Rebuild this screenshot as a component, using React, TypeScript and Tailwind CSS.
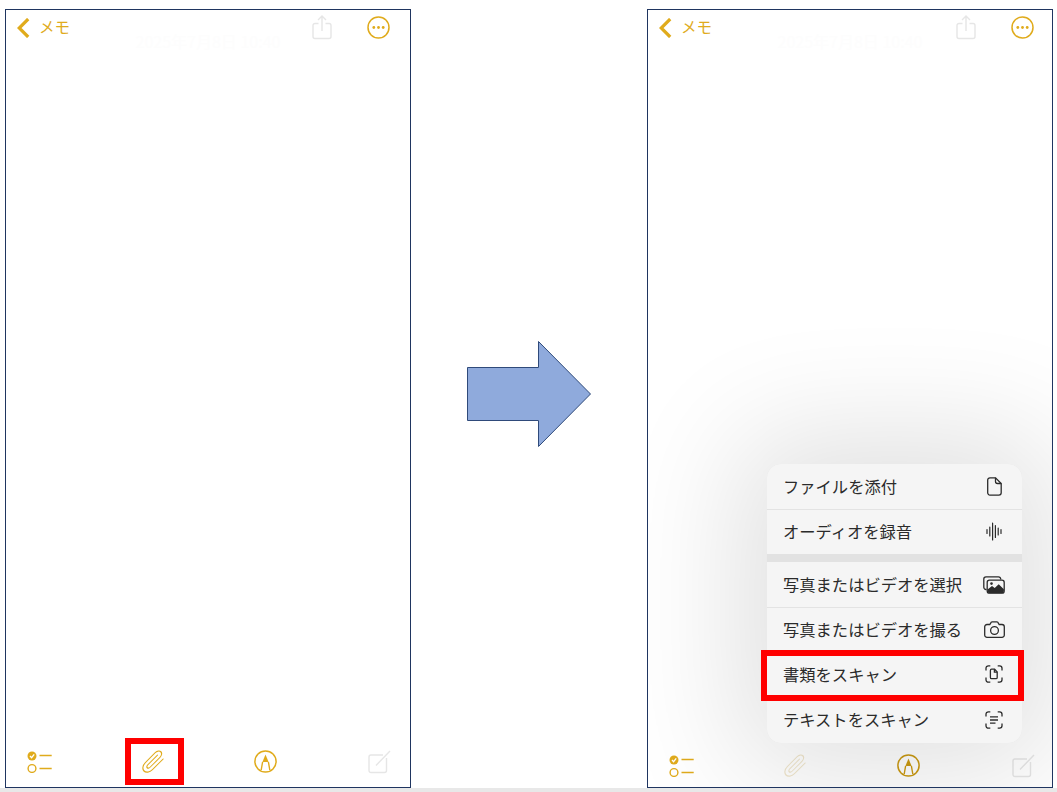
const GOLD = "#e0ab1c";
const DARK_GOLD = "#cb9a12";
const FAINT = "#e6e6e6";
const INK = "#2b2b2b";

function Chevron() {
  return (
    <svg width="13" height="20" viewBox="0 0 13 20" fill="none">
      <path d="M11.2 1 2.2 10l9 9" stroke={GOLD} strokeWidth="3.2" />
    </svg>
  );
}

function Share() {
  return (
    <svg width="20" height="25" viewBox="0 0 20 25" fill="none" stroke={FAINT} strokeWidth="1.4">
      <path d="M6.5 8.5H3a2 2 0 0 0-2 2v11a2 2 0 0 0 2 2h14a2 2 0 0 0 2-2v-11a2 2 0 0 0-2-2h-3.5" />
      <path d="M10 16V1.5M6 5l4-4 4 4" />
    </svg>
  );
}

function More() {
  return (
    <svg width="23" height="23" viewBox="0 0 23 23" fill="none">
      <circle cx="11.5" cy="11.5" r="10.5" stroke={GOLD} strokeWidth="1.5" />
      <circle cx="6.8" cy="11.5" r="1.4" fill={GOLD} />
      <circle cx="11.5" cy="11.5" r="1.4" fill={GOLD} />
      <circle cx="16.2" cy="11.5" r="1.4" fill={GOLD} />
    </svg>
  );
}

function Checklist() {
  return (
    <svg width="25" height="22" viewBox="0 0 25 22" fill="none">
      <circle cx="5" cy="5" r="4.5" fill={GOLD} />
      <path d="M3 5l1.6 1.7L7.2 3.4" stroke="#fff" strokeWidth="1.3" />
      <path d="M12.5 4.5h12.2M12.5 17.5h12.2" stroke={GOLD} strokeWidth="1.4" />
      <circle cx="5" cy="17.5" r="3.9" stroke={GOLD} strokeWidth="1.4" />
    </svg>
  );
}

function Clip({ color }: { color: string }) {
  return (
    <svg width="23" height="25" viewBox="1 1 22 22" fill="none" stroke={color} strokeWidth="1.15" strokeLinecap="round" overflow="visible">
      <g transform="translate(12 12) rotate(-45) scale(1.1 0.8) rotate(45) translate(-12 -12)">
        <path d="m21.44 11.05-9.19 9.19a6 6 0 0 1-8.49-8.49l8.57-8.57A4 4 0 1 1 18 8.84l-8.59 8.57a2 2 0 0 1-2.83-2.83l8.49-8.48" />
      </g>
    </svg>
  );
}

function Markup({ color }: { color: string }) {
  return (
    <svg width="23" height="23" viewBox="0 0 23 23" fill="none">
      <circle cx="11.5" cy="11.5" r="10.6" stroke={color} strokeWidth="1.5" />
      <path d="M11.5 4.6 14.6 12H8.4z" fill={color} />
      <path d="M8.6 12 7.2 20M14.4 12l1.4 8" stroke={color} strokeWidth="1.4" />
    </svg>
  );
}

function Compose() {
  return (
    <svg width="23" height="25" viewBox="0 0 23 25" fill="none" stroke={FAINT} strokeWidth="1.4">
      <path d="M18.5 9v12.5a2 2 0 0 1-2 2H3a2 2 0 0 1-2-2V8a2 2 0 0 1 2-2h12" />
      <path d="M8 16.5 22 2" />
    </svg>
  );
}

function DocIcon() {
  return (
    <svg width="15" height="19" viewBox="0 0 15 19" fill="none" stroke={INK} strokeWidth="1.3">
      <path d="M3 .8h5.5l5.7 5.7V15.7a2.4 2.4 0 0 1-2.4 2.4H3a2.3 2.3 0 0 1-2.3-2.4V3.2A2.3 2.3 0 0 1 3 .8z" />
      <path d="M8.5.8v3.7a2 2 0 0 0 2 2h3.7" />
    </svg>
  );
}

function WaveIcon() {
  return (
    <svg width="17" height="19" viewBox="0 0 17 19" fill="none" stroke={INK} strokeWidth="1.2" strokeLinecap="round">
      <path d="M1 7.5v4M3.8 5v9M6.6 1v17M9.4 3.5v12M12.2 6v7M15 7.5v4" />
    </svg>
  );
}

function PhotosIcon() {
  return (
    <svg width="22" height="18" viewBox="0 0 22 18" fill="none">
      <path d="M3.5 13.5H3A2.2 2.2 0 0 1 .8 11.3V3A2.2 2.2 0 0 1 3 .8h12.5A2.2 2.2 0 0 1 17.7 3v.5" stroke={INK} strokeWidth="1.3" />
      <rect x="4.2" y="4.2" width="17" height="13" rx="2.2" fill="#f5f5f5" stroke={INK} strokeWidth="1.3" />
      <path d="M4.5 13.5 9 10l2.7 2 4-3.7 5.2 5V15a2.2 2.2 0 0 1-2.2 2.2H6.5A2.2 2.2 0 0 1 4.5 15z" fill={INK} />
      <circle cx="8.5" cy="7.6" r="1.3" fill={INK} />
    </svg>
  );
}

function CameraIcon() {
  return (
    <svg width="21" height="17" viewBox="0 0 21 17" fill="none" stroke={INK} strokeWidth="1.3">
      <path d="M3 3.5h2.8L7.3 1.2a1 1 0 0 1 .8-.4h4.8a1 1 0 0 1 .8.4l1.5 2.3H18a2.3 2.3 0 0 1 2.3 2.3v8.2a2.3 2.3 0 0 1-2.3 2.3H3A2.3 2.3 0 0 1 .7 14V5.8A2.3 2.3 0 0 1 3 3.5z" />
      <circle cx="10.5" cy="9.5" r="3.9" />
    </svg>
  );
}

function Corners() {
  return <path d="M1 5.5V3.2A2.4 2.4 0 0 1 3.4.8h1.9M12.7.8h1.9A2.4 2.4 0 0 1 17 3.2v2.3M17 12.5v2.3a2.4 2.4 0 0 1-2.4 2.4h-1.9M5.3 17.2H3.4A2.4 2.4 0 0 1 1 14.8v-2.3" />;
}

function ScanDocIcon() {
  return (
    <svg width="18" height="18" viewBox="0 0 18 18" fill="none" stroke={INK} strokeWidth="1.3">
      <Corners />
      <path d="M6.6 4.2h3l2.6 2.7v5.6a1.2 1.2 0 0 1-1.2 1.2H6.6a1.2 1.2 0 0 1-1.2-1.2V5.4a1.2 1.2 0 0 1 1.2-1.2z" />
      <path d="M9.4 4.2v2.9h2.8" />
    </svg>
  );
}

function ScanTextIcon() {
  return (
    <svg width="18" height="18" viewBox="0 0 18 18" fill="none" stroke={INK} strokeWidth="1.3">
      <Corners />
      <path d="M5 5.8h8M5 9h8M5 12.2h5.5" />
    </svg>
  );
}

function NotePhone({ clipColor, inkColor, headerClass, toolbarClass, markClass, composeClass, children }: { clipColor: string; inkColor: string; headerClass: string; toolbarClass: string; markClass: string; composeClass: string; children?: React.ReactNode }) {
  return (
    <div className="relative flex h-[779px] w-[406px] shrink-0 flex-col overflow-hidden border border-[#1f3560] bg-white">
      <div className={`mt-[5px] flex h-[25px] items-center pl-[11px] ${headerClass}`}>
        <Chevron />
        <span className="mb-[2px] ml-[9px] text-[15.5px] text-[#e0ab1c]">メモ</span>
        <span className="ml-auto flex"><Share /></span>
        <span className="ml-[35px] flex"><More /></span>
      </div>
      <div className="-mt-[7px] text-center text-[16px] leading-[16px] text-[#fdfdfd]">2025年7月8日 10:40</div>
      <div className={`mt-auto flex items-center pl-[21px] ${toolbarClass}`}>
        <Checklist />
        <span className="ml-[90px] flex"><Clip color={clipColor} /></span>
        <span className={`flex ${markClass}`}><Markup color={inkColor} /></span>
        <span className={`flex ${composeClass}`}><Compose /></span>
      </div>
      {children}
    </div>
  );
}

const rows: { label: string; icon: React.ReactNode; cls: string }[] = [
  { label: "ファイルを添付", icon: <DocIcon />, cls: "h-[46px] border-b border-[#e3e3e3]" },
  { label: "オーディオを録音", icon: <WaveIcon />, cls: "h-[44px] pb-[2px]" },
  { label: "写真またはビデオを選択", icon: <PhotosIcon />, cls: "mt-[8px] h-[46px] border-b border-[#e3e3e3]" },
  { label: "写真またはビデオを撮る", icon: <CameraIcon />, cls: "h-[45px] border-b border-[#e3e3e3] pb-[2px]" },
  { label: "書類をスキャン", icon: <ScanDocIcon />, cls: "h-[45px] border-b border-[#e3e3e3] pb-[2px]" },
  { label: "テキストをスキャン", icon: <ScanTextIcon />, cls: "h-[45px] pb-[2px]" },
];

export default function App() {
  return (
    <div className="flex h-[792px] w-[1057px] flex-col overflow-hidden bg-white font-['Noto_Sans_CJK_JP','Noto_Sans',sans-serif]">
      <div className="flex flex-1 pl-[5px] pt-[9px]">
        <NotePhone clipColor={GOLD} inkColor={GOLD} headerClass="pr-[20px]" toolbarClass="pb-[13px]" markClass="ml-[89px]" composeClass="ml-[91px]">
          <div className="absolute left-[119px] top-[728px] h-[47px] w-[59px] border-[6px] border-[#ff0000]" />
        </NotePhone>
        <svg className="ml-[56px] mr-[56px] mt-[332px] shrink-0" width="124" height="106" viewBox="0 0 124 106">
          <path d="M.5 26.5h71V.5L123.5 53 71.5 105.5V79.5H.5z" fill="#8faadc" stroke="#2f4a7a" />
        </svg>
        <NotePhone clipColor="#f0e6cc" inkColor={DARK_GOLD} headerClass="pr-[18px]" toolbarClass="pb-[9px]" markClass="ml-[90px]" composeClass="ml-[92px]">
          <div className="absolute left-[119px] top-[454px] w-[255px] overflow-hidden rounded-[14px] bg-[#e2e2e2] shadow-[0_0_120px_30px_rgba(0,0,0,0.12)]">
            {rows.map((r) => (
              <div key={r.label} className={`flex items-center justify-between bg-[#f5f5f5] pl-[16px] text-[16.3px] text-[#2b2b2b] ${r.cls}`}>
                <span>{r.label}</span>
                <span className="mr-[16px] flex w-[24px] justify-center">{r.icon}</span>
              </div>
            ))}
          </div>
          <div className="absolute left-[113px] top-[640px] h-[51px] w-[263px] border-[6px] border-[#ff0000]" />
        </NotePhone>
      </div>
      <div className="h-[4px] bg-[#e8e8e8]" />
    </div>
  );
}
